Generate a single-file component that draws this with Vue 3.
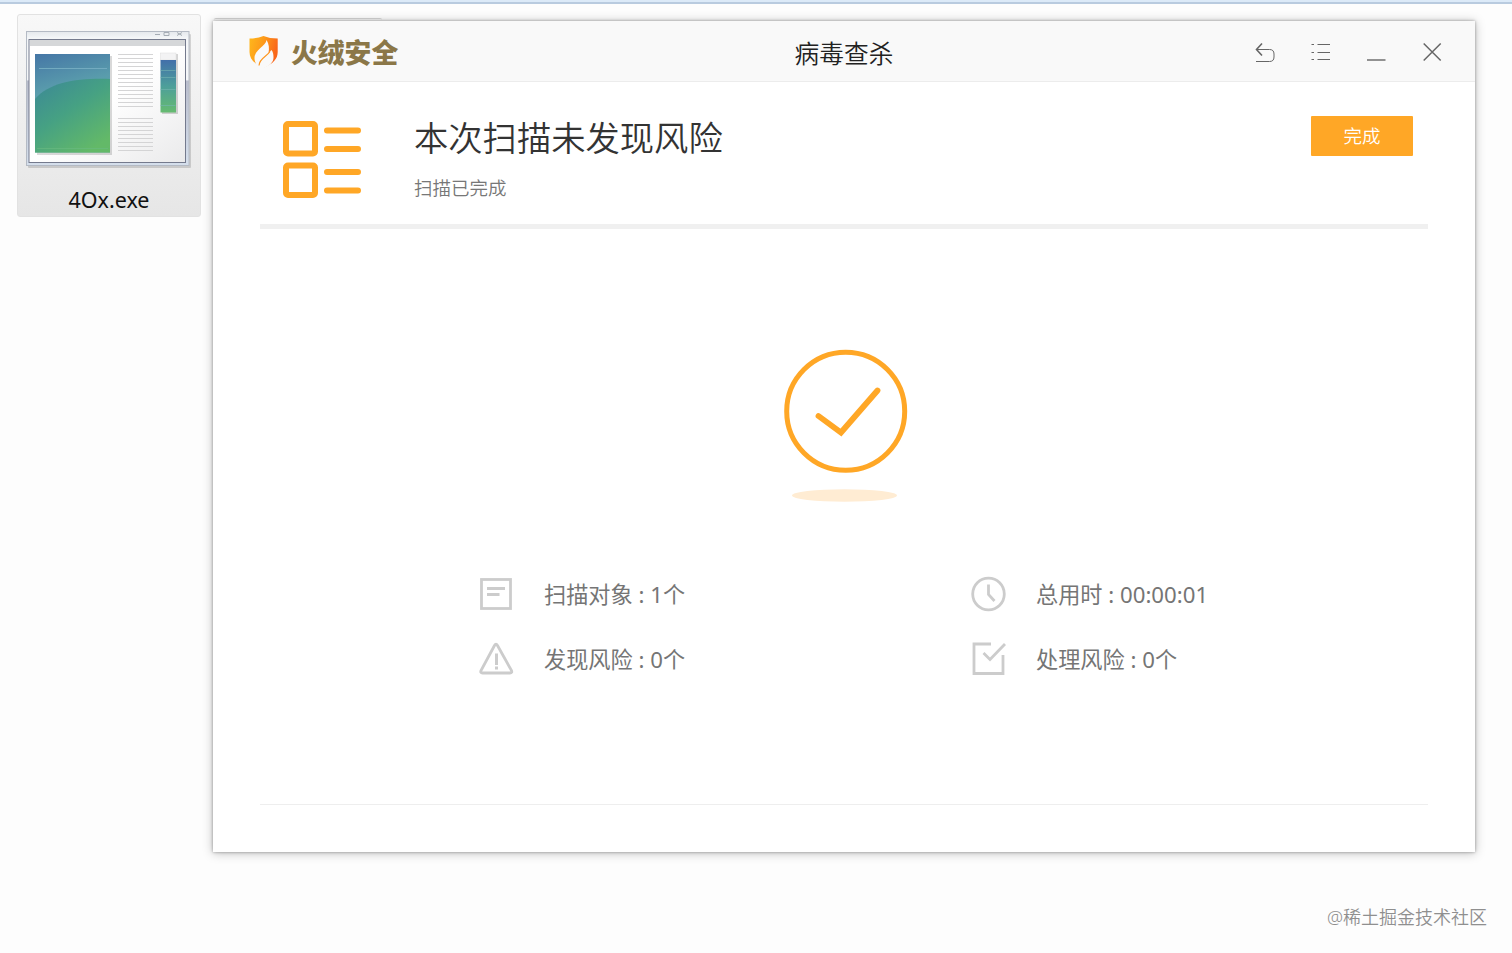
<template>
  <div class="desktop">
    <div class="top-edge"></div>

    <div class="workspace">
      <div class="shortcut">
        <svg class="shortcut-icon" width="168" height="138" viewBox="0 0 168 138">
          <defs>
            <linearGradient id="frame" x1="0" y1="0" x2="0" y2="1">
              <stop offset="0" stop-color="#e4e8ec" />
              <stop offset="0.05" stop-color="#f4f6f8" />
              <stop offset="0.36" stop-color="#f4f6f8" />
              <stop offset="0.37" stop-color="#b9bdcc" />
              <stop offset="1" stop-color="#d5dfec" />
            </linearGradient>
            <linearGradient id="paper" x1="0" y1="0" x2="1" y2="1">
              <stop offset="0.5" stop-color="#ffffff" />
              <stop offset="1" stop-color="#eaeaeb" />
            </linearGradient>
            <linearGradient id="sky" x1="0" y1="0" x2="0.2" y2="1">
              <stop offset="0" stop-color="#4576a6" />
              <stop offset="0.4" stop-color="#5a9dac" />
              <stop offset="1" stop-color="#57a88e" />
            </linearGradient>
            <linearGradient id="hill" x1="0" y1="0" x2="0.7" y2="1">
              <stop offset="0" stop-color="#3b8797" />
              <stop offset="0.5" stop-color="#46a183" />
              <stop offset="1" stop-color="#63b968" />
            </linearGradient>
            <linearGradient id="strip" x1="0" y1="0" x2="0" y2="1">
              <stop offset="0" stop-color="#426faa" />
              <stop offset="0.5" stop-color="#4d9f9a" />
              <stop offset="1" stop-color="#66bb70" />
            </linearGradient>
          </defs>
          <rect x="3" y="4" width="163" height="134" rx="1" fill="#000" opacity="0.14" />
          <rect x="1.500" y="1.500" width="162.500" height="134" fill="url(#frame)" stroke="#b4bac4" />
          <path d="M130 4.500h5M139 2.500h5v3h-5zM152 2.500l5 3M157 2.500l-5 3" fill="none" stroke="#a5acb4" />
          <rect x="4" y="9.500" width="156.500" height="123" fill="url(#paper)" stroke="#747a8d" />
          <rect x="5" y="10" width="155" height="6" fill="#d5d7d9" />
          <rect x="12" y="26" width="75" height="99" fill="#000" opacity="0.15" />
          <rect x="10" y="24" width="75" height="98.500" fill="url(#sky)" />
          <path d="M10 69C25 52 52 48 85 49V122.500H10Z" fill="url(#hill)" />
          <path d="M14 38.500H82" stroke="#73abc0" />
          <path d="M12 118.500H83" stroke="#6bbb83" opacity="0.6" />
          <path
            v-for="y in textLines"
            :key="y"
            :d="`M93 ${y}.5H128`"
            stroke="#d4d4d5"
          />
          <rect x="137" y="24" width="16" height="60" fill="#000" opacity="0.16" />
          <rect x="135.500" y="23" width="15.500" height="7" fill="#f3f3f4" stroke="#ddd" stroke-width="0.500" />
          <rect x="135.500" y="30" width="15.500" height="52.500" fill="url(#strip)" />
          <path d="M135.500 40.500h15M135.500 47.500h15M135.500 59.500h15M135.500 75.500h15" stroke="#75b5b2" opacity="0.6" />
        </svg>
        <span class="shortcut-name">4Ox.exe</span>
      </div>

      <main class="window">
        <header class="titlebar">
          <div class="brand">
            <svg width="30" height="33" viewBox="0 0 30 33">
              <defs>
                <linearGradient id="shield" x1="0" y1="0" x2="1" y2="0.3">
                  <stop offset="0" stop-color="#ffb81c" />
                  <stop offset="0.5" stop-color="#fd9a1a" />
                  <stop offset="1" stop-color="#f9661a" />
                </linearGradient>
              </defs>
              <path d="M1.500 3.500Q9 3.500 15.500 1Q21.500 3.500 29.700 3.500V17C29.700 24 25 29 15.500 32.500C6.500 29 1.500 24 1.500 17Z" fill="url(#shield)" />
              <path d="M18.500 5C18 11 6 15 6.500 23.500C6.700 27.500 8.500 30 11.500 33H16C21.500 30.500 25.500 27.500 25.500 22.500C25.500 19 25 17 23.500 15L20.500 18C21.500 13 21 9 18.500 5Z" fill="#f9f9f9" />
              <path d="M22 16.500C18.500 22 11.500 23 11 30.500" fill="none" stroke="#fe941b" stroke-width="1.100" />
            </svg>
            <span class="brand-name">火绒安全</span>
          </div>
          <h1 class="window-title">病毒查杀</h1>
          <div class="controls">
            <svg width="22" height="22" viewBox="0 0 22 22">
              <path d="M9 1.500L3.500 7.500L9 13.500" stroke-width="1.600" />
              <path d="M3 7.500H16.500Q21 7.500 21 12V15Q21 19.500 16.500 19.500H3" />
            </svg>
            <svg width="22" height="22" viewBox="0 0 22 22">
              <path d="M2.500 2.500H5M8.500 2.500H21M2.500 10.500H5M8.500 10.500H21M2.500 17.500H5M8.500 17.500H21" stroke-width="1.200" />
            </svg>
            <svg width="22" height="22" viewBox="0 0 22 22">
              <path d="M2 18H20.500" stroke-width="1.400" />
            </svg>
            <svg width="22" height="22" viewBox="0 0 22 22">
              <path d="M2.700 1.500L19.700 18.500M19.700 1.500L2.700 18.500" stroke-width="1.500" />
            </svg>
          </div>
        </header>

        <section class="summary">
          <svg width="80" height="78" viewBox="0 0 80 78" fill="none" stroke="#ffa726" stroke-linecap="round">
            <rect x="4" y="3" width="29" height="29.500" rx="2" stroke-width="6" />
            <rect x="4" y="44.500" width="29" height="29.500" rx="2" stroke-width="6" />
            <path d="M45 9.500H76M45 28H76M45 51H76M45 69.500H76" stroke-width="6" />
          </svg>
          <div class="summary-text">
            <h2>本次扫描未发现风险</h2>
            <p>扫描已完成</p>
          </div>
          <button class="done">完成</button>
        </section>

        <section class="result">
          <svg class="result-mark" width="124" height="154" viewBox="0 0 124 154">
            <ellipse cx="60.500" cy="147.500" rx="52.500" ry="6.300" fill="#ffecd3" />
            <circle cx="61.700" cy="63.300" r="59" fill="none" stroke="#ffa726" stroke-width="5" />
            <path d="M34.500 68L57 84.500L93.500 42.500" fill="none" stroke="#ffa726" stroke-width="5.800" stroke-linecap="round" />
          </svg>

          <ul class="stats">
            <li v-for="stat in stats" :key="stat.label">
              <svg width="36" height="36" viewBox="0 0 36 36" fill="none" stroke="#cccccc" stroke-width="2.800">
                <template v-if="stat.icon === 'file'">
                  <rect x="3.500" y="3.500" width="29" height="29" />
                  <path d="M9 12.500H27M9 18.500H21.500" stroke-width="3" />
                </template>
                <template v-else-if="stat.icon === 'clock'">
                  <circle cx="18.500" cy="18" r="15.800" />
                  <path d="M18.500 8.500V18.500L24.500 25" />
                </template>
                <template v-else-if="stat.icon === 'warning'">
                  <path d="M16.500 4.500Q18 2 19.500 4.500L33.500 29.500Q34.500 32 32 32H4.500Q2 32 3 29.500Z" />
                  <path d="M18.500 12.500V24M18.500 25.500V28.500" stroke-width="3" />
                </template>
                <template v-else>
                  <path d="M21 3H4V32.500H33V14" />
                  <path d="M13.500 12L20 18.500L35 3" />
                </template>
              </svg>
              <span class="stat-text">{{ stat.label }} : {{ stat.value }}</span>
            </li>
          </ul>
        </section>

        <footer class="window-footer"></footer>
      </main>
    </div>

    <p class="watermark">@稀土掘金技术社区</p>
  </div>
</template>

<script setup>
const stats = [
  { icon: "file", label: "扫描对象", value: "1个" },
  { icon: "clock", label: "总用时", value: "00:00:01" },
  { icon: "warning", label: "发现风险", value: "0个" },
  { icon: "check", label: "处理风险", value: "0个" },
];

// строки текста на миниатюре
const textLines = [24, 28, 32, 36, 40, 44, 48, 52, 56, 60, 64, 68, 72, 76, 88, 92, 96, 100, 104, 108, 112, 116, 120];
</script>

<style>
body {
  margin: 0;
  background: #fdfdfd;
}
</style>

<style scoped>
.desktop {
  height: 953px;
  overflow: hidden;
  display: flex;
  flex-direction: column;
  background: #fdfdfd;
  font-family: "Noto Sans", "Noto Sans CJK SC", sans-serif;
  font-weight: 350;
}

.top-edge {
  height: 2px;
  flex: none;
  background: #dceaf8;
  border-bottom: 2px solid #b9cbdf;
}

.workspace {
  display: flex;
  align-items: flex-start;
  gap: 12px;
  padding: 10px 37px 0 17px;
}

.shortcut {
  box-sizing: border-box;
  width: 184px;
  height: 203px;
  flex: none;
  display: flex;
  flex-direction: column;
  align-items: center;
  padding-top: 15px;
  border: 1px solid #e2e2e2;
  border-radius: 3px;
  background: linear-gradient(#f8f8f8, #e6e6e6);
}

.shortcut-icon {
  flex: none;
}

.shortcut-name {
  margin-top: 15px;
  font-size: 21.500px;
  line-height: 34px;
  font-weight: 400;
  color: #111;
}

.window {
  position: relative;
  flex: 1;
  height: 831px;
  margin-top: 7px;
  display: flex;
  flex-direction: column;
  background: #fff;
  box-shadow: 0 0 3px rgba(0, 0, 0, 0.35), 0 1px 10px rgba(0, 0, 0, 0.25);
}

/* край окна, лежащего позади */
.window::before {
  content: "";
  position: absolute;
  top: -3px;
  left: 1px;
  width: 168px;
  height: 2px;
  border-top: 1px solid #c4c4c4;
  border-radius: 2px 2px 0 0;
}

.titlebar {
  box-sizing: border-box;
  height: 61px;
  flex: none;
  display: grid;
  grid-template-columns: 1fr auto 1fr;
  align-items: center;
  padding: 1px 32px 0 35px;
  background: #f9f9f9;
  border-bottom: 1px solid #ececec;
}

.brand {
  display: flex;
  align-items: center;
  gap: 13px;
}

.brand-name {
  padding-top: 2px;
  font-size: 26.800px;
  line-height: 40px;
  font-weight: 900;
  color: #8b7748;
}

.window-title {
  margin: 4px 3px 0 0;
  font-size: 24.700px;
  line-height: 36px;
  font-weight: 350;
  color: #222;
}

.controls {
  display: flex;
  justify-content: flex-end;
  gap: 34px;
  padding-top: 2px;
  fill: none;
  stroke: #666;
}

.summary {
  box-sizing: border-box;
  height: 147px;
  flex: none;
  display: flex;
  align-items: flex-start;
  margin: 0 47px;
  padding: 39px 15px 0 22px;
  border-bottom: 5px solid #f0f0f0;
}

.summary-text {
  flex: 1;
  margin-left: 52px;
}

.summary-text h2 {
  margin: -8px 0 0;
  font-size: 34.300px;
  line-height: 50px;
  font-weight: 350;
  color: #333;
}

.summary-text p {
  margin: 11px 0 0;
  font-size: 18.500px;
  line-height: 28px;
  color: #777;
}

.done {
  width: 102px;
  height: 40px;
  margin-top: -5px;
  padding: 0;
  border: 0;
  border-radius: 1px;
  background: #ffa726;
  color: #fff;
  font: inherit;
  font-size: 18.500px;
  line-height: 38px;
}

.result {
  flex: 1;
  display: flex;
  flex-direction: column;
  align-items: center;
  padding-top: 119px;
}

.result-mark {
  margin-left: 4px;
}

.stats {
  list-style: none;
  display: grid;
  grid-template-columns: 492px 250px;
  row-gap: 29px;
  align-self: flex-start;
  margin: 74px 0 0 265px;
  padding: 0;
}

.stats li {
  display: flex;
  align-items: center;
  gap: 30px;
  height: 36px;
  font-size: 22.200px;
  font-weight: 400;
  color: #757575;
  white-space: pre;
}

.stat-text {
  padding-bottom: 2px;
}

.window-footer {
  height: 47px;
  flex: none;
  margin: 0 47px;
  border-top: 1px solid #eee;
}

.watermark {
  margin: 51px 25px 0;
  font-size: 18px;
  line-height: 28px;
  text-align: right;
  color: #8f8f8f;
}
</style>
